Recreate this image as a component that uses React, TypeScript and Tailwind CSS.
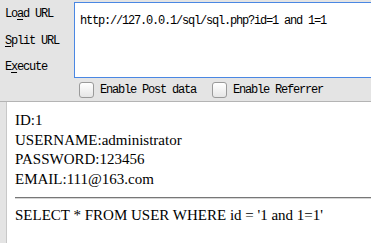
import React from 'react';

function Label({ pre, u, post }: { pre: string; u: string; post: string }) {
  return (
    <div className="h-[26.5px] flex items-center text-[12px] tracking-[-1.2px] text-black">
      {pre}
      <span className="underline underline-offset-2">{u}</span>
      {post}
    </div>
  );
}

function Box({ label }: { label: string }) {
  return (
    <label className="flex items-center gap-[6px]">
      <span className="w-[15px] h-[16px] rounded-[3px] border border-[#9a9a9a] bg-gradient-to-b from-[#ffffff] to-[#e6e6e6]" />
      <span className="text-[12px] tracking-[-1.2px] text-black">{label}</span>
    </label>
  );
}

export default function App() {
  return (
    <div className="w-[371px] h-[243px] overflow-hidden bg-[#e4e4e4]">
      <div className="flex h-[78px] font-['Liberation_Mono',monospace]">
        <div className="w-[74px] pl-[5px] pt-[1px]">
          <Label pre="Lo" u="a" post="d URL" />
          <Label pre="" u="S" post="plit URL" />
          <Label pre="E" u="x" post="ecute" />
        </div>
        <div className="flex-1 mt-[2px] border border-r-0 border-[#4a87e3] bg-white pl-[5px] pt-[5px]">
          <span className="text-[12px] tracking-[-1.2px] text-black">http://127.0.0.1/sql/sql.php?id=1 and 1=1</span>
        </div>
      </div>
      <div className="h-[24px] flex items-center pl-[79px] gap-[16px] border-b border-[#b4b4b4] font-['Liberation_Mono',monospace]">
        <Box label="Enable Post data" />
        <Box label="Enable Referrer" />
      </div>
      <div className="flex h-[141px]">
        <div className="w-[7px] border-r border-[#c8c8c8]" />
        <div className="flex-1 bg-white pl-[8px] pt-[9px] text-[15px] leading-[19.5px] text-black font-['Liberation_Serif',serif]">
          <div>ID:1</div>
          <div>USERNAME:administrator</div>
          <div>PASSWORD:123456</div>
          <div>EMAIL:111@163.com</div>
          <div className="mt-[8px] mb-[7px] border-t border-b border-t-[#777777] border-b-[#d6d6d6]" />
          <div>SELECT * FROM USER WHERE id = '1 and 1=1'</div>
        </div>
      </div>
    </div>
  );
}
